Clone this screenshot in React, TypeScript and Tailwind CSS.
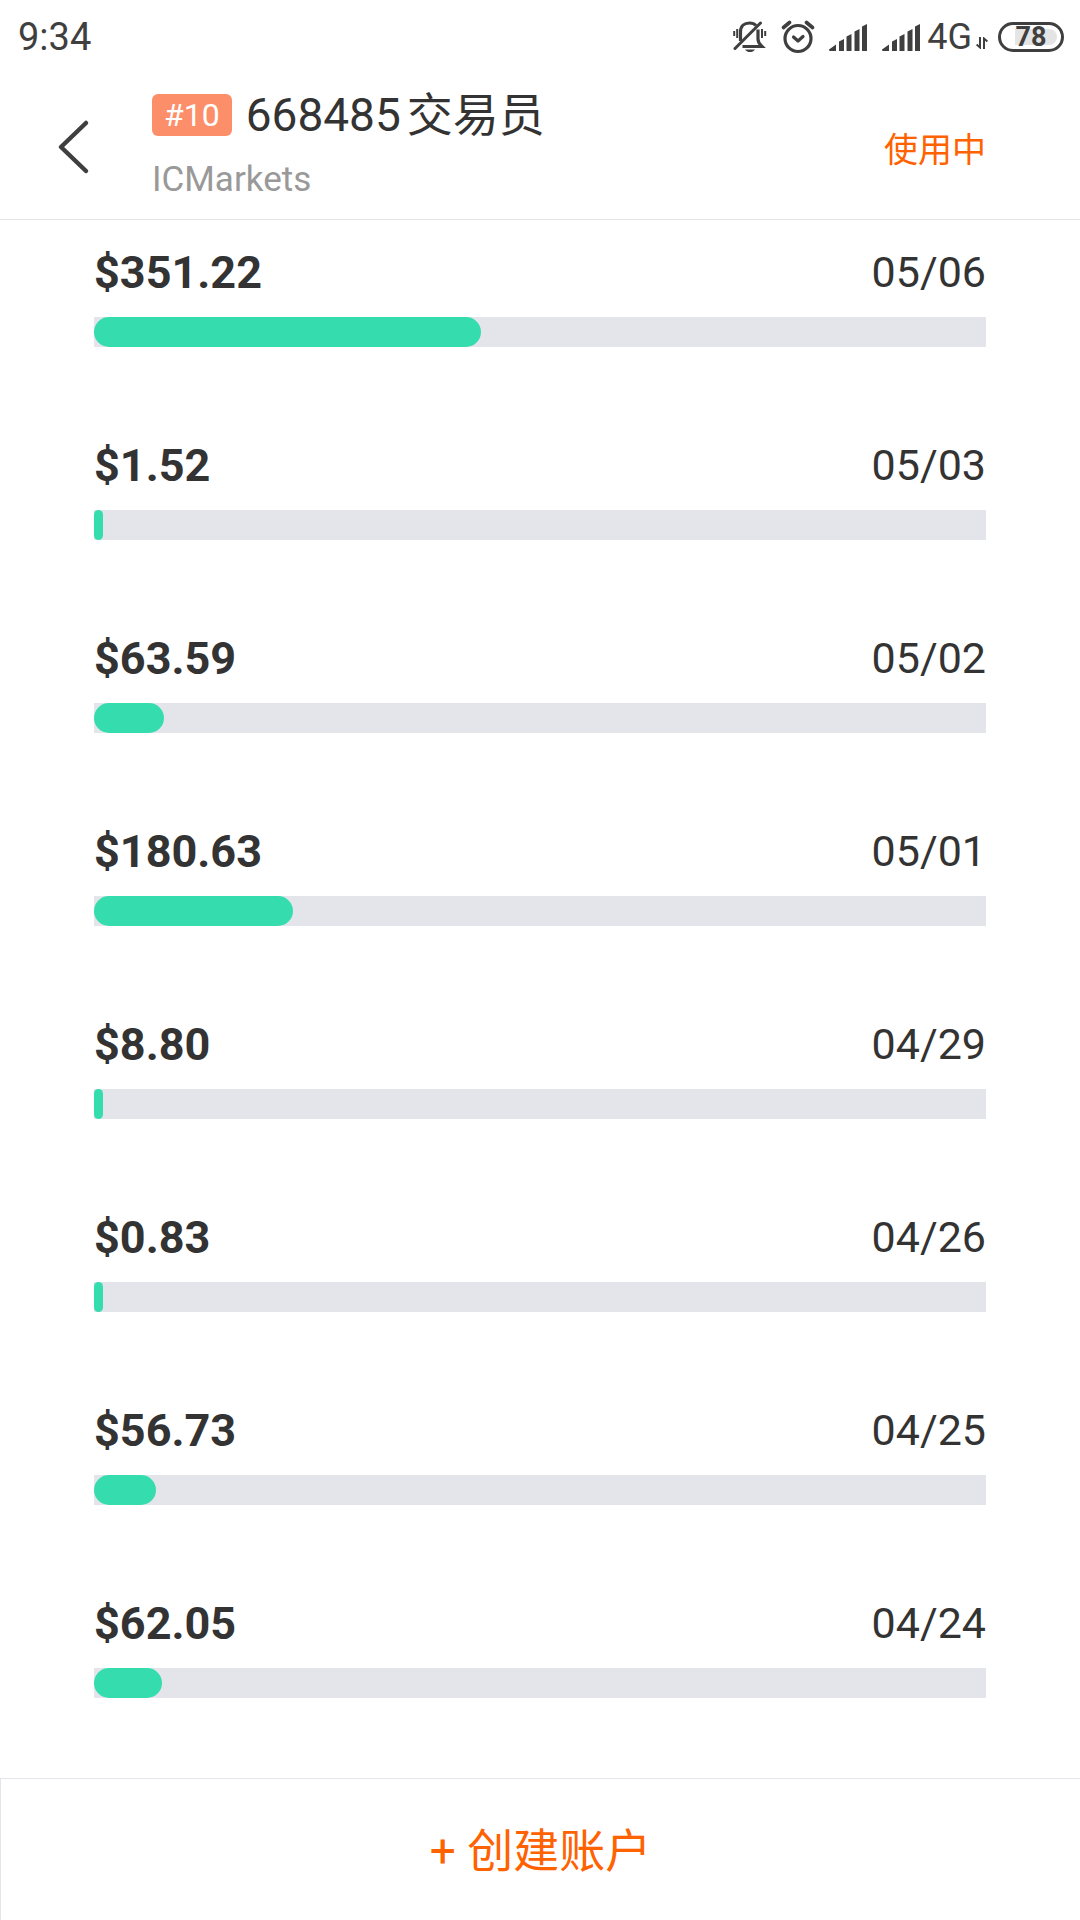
import React from "react";

const FULL_WIDTH = 892;

const entries = [
  { amount: "$351.22", date: "05/06", fill: 387 },
  { amount: "$1.52", date: "05/03", fill: 9 },
  { amount: "$63.59", date: "05/02", fill: 70 },
  { amount: "$180.63", date: "05/01", fill: 199 },
  { amount: "$8.80", date: "04/29", fill: 9 },
  { amount: "$0.83", date: "04/26", fill: 9 },
  { amount: "$56.73", date: "04/25", fill: 62 },
  { amount: "$62.05", date: "04/24", fill: 68 },
];

function MutedBellIcon() {
  return (
    <svg width="34" height="34" viewBox="0 0 34 34" fill="none" stroke="#3f3f3f" aria-hidden="true">
      <path d="M7.5 21V12C7.5 6 11.5 3 16.5 3c2.5 0 5 .8 6.500 2.500M25 9.500V19c0 4 1.500 5 4 7.500H9.500" strokeWidth="3.200" />
      <path d="M2 28.500 27.500 3" strokeWidth="3" strokeLinecap="round" />
      <path d="M1.200 11v5M4.200 9v9M29 9v9M32.200 11v5" strokeWidth="2" />
      <path d="M12 29.500h10c-1.500 2-3 2.600-5 2.600S13.500 31.500 12 29.500Z" fill="#3f3f3f" stroke="none" />
    </svg>
  );
}

function AlarmIcon() {
  return (
    <svg width="34" height="34" viewBox="0 0 34 34" fill="none" stroke="#3f3f3f" aria-hidden="true">
      <circle cx="17" cy="18.500" r="13" strokeWidth="3.200" />
      <path d="M12.500 17l4.500 4 5-4.500" strokeWidth="3.200" strokeLinecap="round" strokeLinejoin="round" />
      <path d="M2.500 7.500 8.500 2.500M25.500 2.500 31.500 7.500" strokeWidth="3.600" strokeLinecap="round" />
    </svg>
  );
}

function SignalIcon() {
  return (
    <svg width="39" height="29" viewBox="0 0 39 29" fill="#3f3f3f" aria-hidden="true">
      <path d="M0 26.500 7 21.500V28H1Q0 28 0 26.500ZM10 18.500 15 16V27.500Q15 28 14.500 28H10.500Q10 28 10 27.500ZM17.500 13.500 22.500 11V27.500Q22.500 28 22 28H18Q17.500 28 17.500 27.500ZM25.500 8.500 30.500 6V27.500Q30.500 28 30 28H26Q25.500 28 25.500 27.500ZM33 3.500 38 1V27.500Q38 28 37.500 28H33.500Q33 28 33 27.500Z" />
    </svg>
  );
}

function DataArrowsIcon() {
  return (
    <svg width="12" height="12" viewBox="0 0 12 12" fill="none" stroke="#3f3f3f" strokeWidth="2" aria-hidden="true">
      <path d="M4 0V10.500L.6 7.500M8 12V1.500l3.400 3" />
    </svg>
  );
}

function StatusBar() {
  return (
    <div className="flex h-[74px] items-center justify-between pr-4 pl-[18px] text-[#3f3f3f]">
      <span className="text-[38px] leading-[44px]">9:34</span>
      <div className="flex items-center">
        <MutedBellIcon />
        <span className="w-3.5" />
        <AlarmIcon />
        <span className="w-3.5" />
        <SignalIcon />
        <span className="w-3.5" />
        <SignalIcon />
        <span className="ml-1.5 text-[36px] leading-[44px]">4G</span>
        <span className="mt-3 mr-2.5 ml-1">
          <DataArrowsIcon />
        </span>
        <div className="relative flex h-[30px] w-[66px] items-center justify-center rounded-full border-3 border-[#3f3f3f]">
          <span className="absolute top-1 right-1 bottom-1 left-3.5 rounded-r-full bg-[#e4e4e4]" />
          <span className="relative text-[27px] leading-[24px] font-bold">78</span>
        </div>
      </div>
    </div>
  );
}

export default function App() {
  return (
    <div className="flex min-h-screen flex-col bg-white font-['Roboto','Noto_Sans_CJK_SC',sans-serif] text-[#333333]">
      <StatusBar />

      <header className="flex h-[146px] items-center border-b border-[#e5e5e5] pr-[94px]">
        <button type="button" aria-label="返回" className="flex w-[152px] shrink-0 pl-14">
          <svg width="36" height="56" viewBox="0 0 36 56" fill="none" stroke="#3f3f3f" strokeWidth="4.500" strokeLinecap="round" strokeLinejoin="round" aria-hidden="true">
            <path d="M30 4 5 28l25 24" />
          </svg>
        </button>
        <div className="flex-1">
          <div className="flex items-center gap-3.5">
            <span className="rounded-md bg-[#fc8f6a] px-3 text-[32px] leading-[42px] text-white">#10</span>
            <h1 className="flex gap-1.5 text-[46px] leading-[62px]">
              <span>668485</span>
              <span>交易员</span>
            </h1>
          </div>
          <p className="mt-1 text-[35px] leading-[60px] text-[#999999]">ICMarkets</p>
        </div>
        <button type="button" className="pt-1.5 text-[34px] leading-[48px] text-[#ff6200]">使用中</button>
      </header>

      <main className="flex-1 px-[94px] pt-[23px] pb-20">
        <ul className="flex flex-col gap-[89px]">
          {entries.map((e) => (
            <li key={e.date}>
              <div className="mb-3.5 flex items-start justify-between">
                <span className="text-[45px] leading-[60px] font-bold">{e.amount}</span>
                <span className="text-[43px] leading-[58px]">{e.date}</span>
              </div>
              <div className="h-[30px] bg-[#e4e5ea]">
                <div
                  className="h-full rounded-[15px] bg-[#35ddae]"
                  style={{ width: `${(e.fill / FULL_WIDTH) * 100}%` }}
                />
              </div>
            </li>
          ))}
        </ul>
      </main>

      <footer className="border-t border-l border-[#e4e5ea]">
        <button type="button" className="flex h-[141px] w-full items-center justify-center pt-0.5 text-[46px] leading-[60px] text-[#ff6200]">
          + 创建账户
        </button>
      </footer>
    </div>
  );
}
